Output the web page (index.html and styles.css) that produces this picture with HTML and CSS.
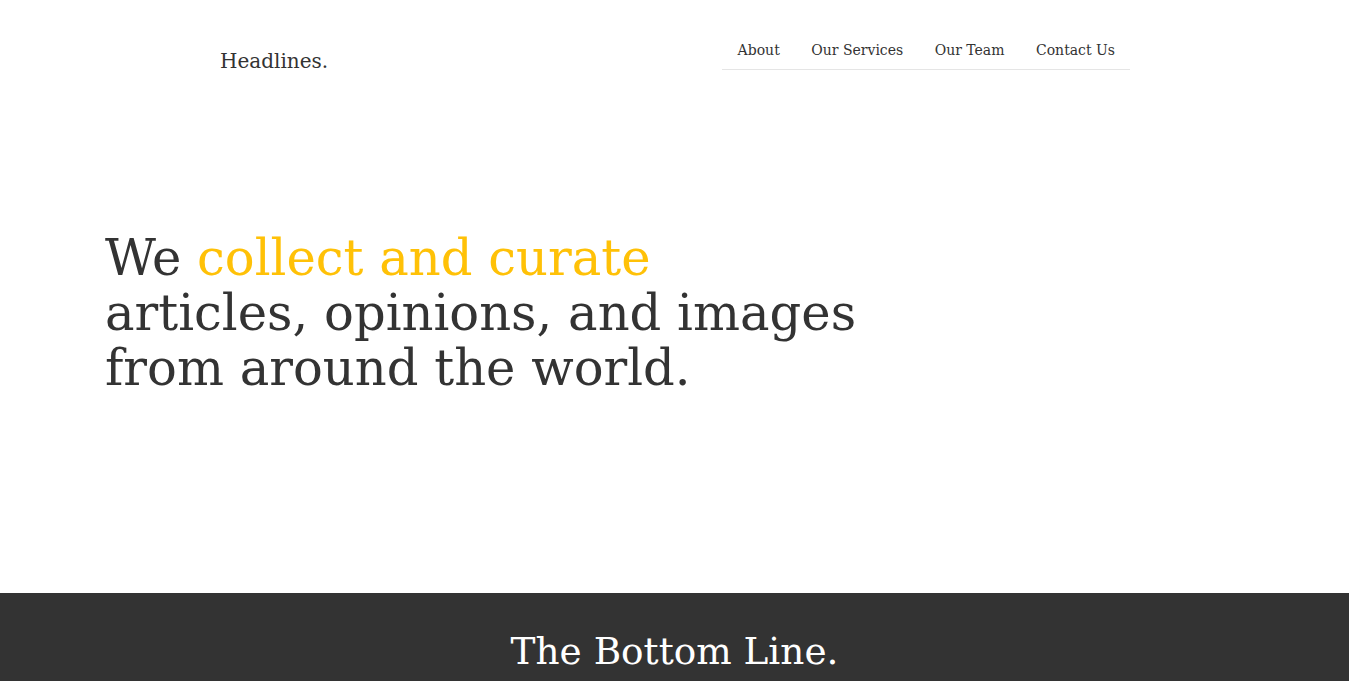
FILE: index.html
```html
<!DOCTYPE html>
<html>
<head>
<meta charset="utf-8">
<link rel="stylesheet" href="styles.css">
</head>
<body>
<header class="header">
  <div class="brand">Headlines.</div>
  <nav class="nav">
    <a href="#">About</a>
    <a href="#">Our Services</a>
    <a href="#">Our Team</a>
    <a href="#">Contact Us</a>
  </nav>
</header>
<section class="hero">
  <h1 class="hero-title">We <span class="accent">collect and curate</span><br>articles, opinions, and images<br>from around the world.</h1>
</section>
<section class="bottom">
  <h2 class="bottom-title">The Bottom Line.</h2>
</section>
</body>
</html>
```
FILE: styles.css
```css
* { box-sizing: border-box; }
html, body { margin: 0; padding: 0; }
body {
  font-family: "DejaVu Serif", "Liberation Serif", serif;
  color: #333;
  background: #fff;
}
.header {
  display: flex;
  justify-content: space-between;
  align-items: flex-start;
  padding: 37px 219px 0 220px;
  height: 120px;
}
.brand {
  font-size: 20px;
  margin-top: 12px;
}
.nav {
  display: flex;
  border-bottom: 1px solid #e5e5e5;
  padding: 5px 15px 11px 16px;
  gap: 31.5px;
}
.nav a {
  color: #333;
  text-decoration: none;
  font-size: 14px;
}
.hero {
  height: 473px;
  padding: 111px 0 0 105px;
}
.hero-title {
  margin: 0;
  font-weight: normal;
  font-size: 49.6px;
  line-height: 55px;
}
.accent { color: #ffc107; }
.bottom {
  background: #333;
  height: 200px;
  padding-top: 36px;
  text-align: center;
}
.bottom-title {
  margin: 0;
  color: #fff;
  font-weight: normal;
  font-size: 37.4px;
}
```
